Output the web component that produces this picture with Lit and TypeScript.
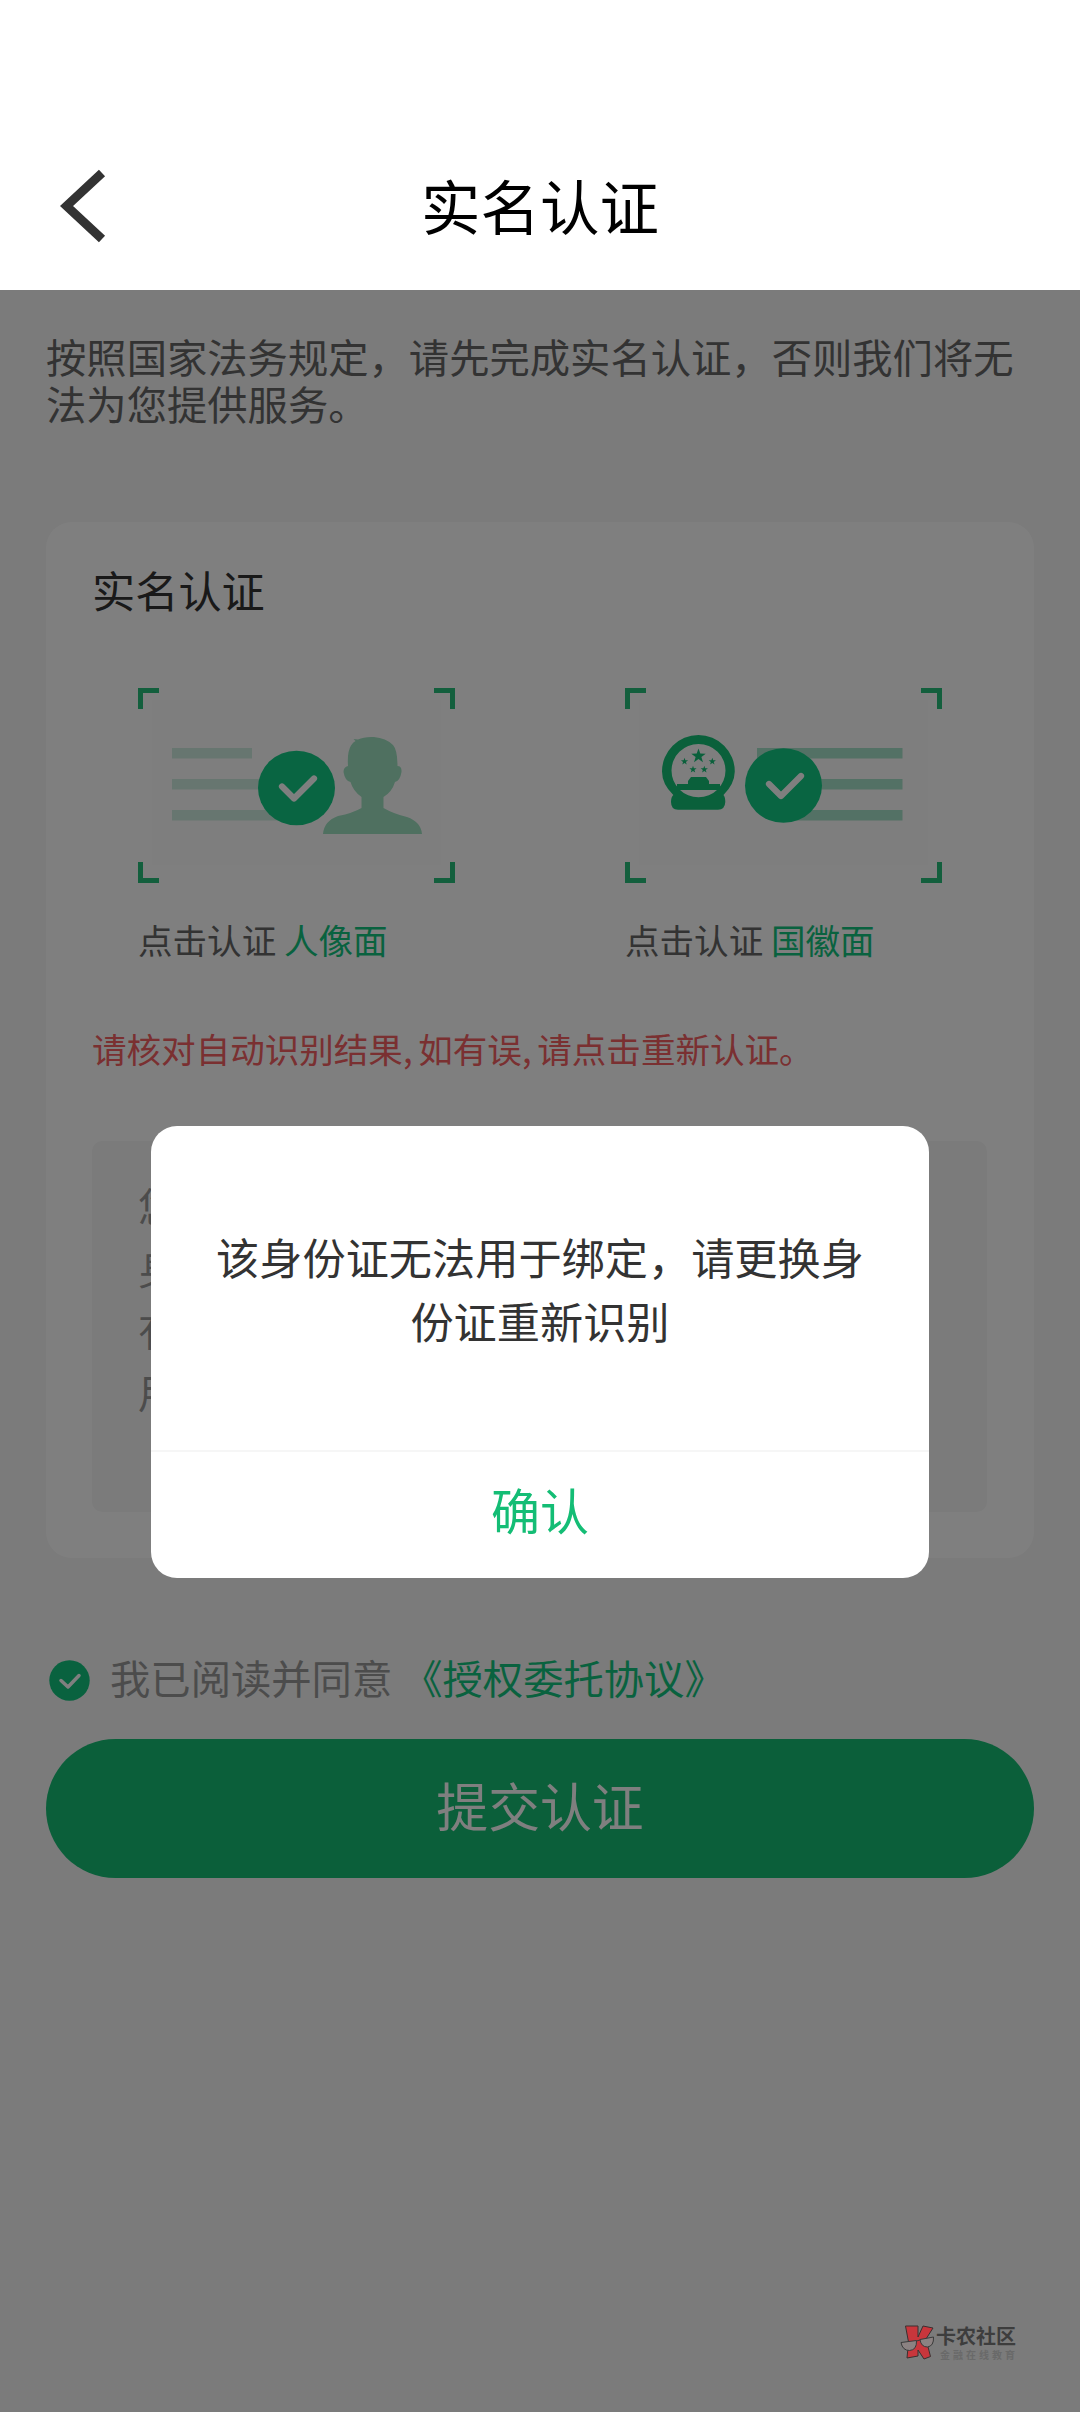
import { LitElement, html, css, svg } from "lit";
import { customElement } from "lit/decorators.js";

const star = (cx: number, cy: number, r: number) => {
  const pts: string[] = [];
  for (let i = 0; i < 10; i++) {
    const k = i % 2 ? r * 0.4 : r;
    const a = -Math.PI / 2 + (i * Math.PI) / 5;
    pts.push(`${(cx + k * Math.cos(a)).toFixed(2)},${(cy + k * Math.sin(a)).toFixed(2)}`);
  }
  return svg`<polygon points=${pts.join(" ")} />`;
};

const corners = svg`<path fill="none" stroke="#26be7b" stroke-width="5"
  d="M2.5 21V2.5H21 M296 2.5H314.5V21 M314.5 174V192.500H296 M21 192.500H2.500V174" />
  <rect x="14" y="12" width="289" height="165" fill="#000" opacity="0.008" />`;

const tick = (cx: number, cy: number) => svg`
  <ellipse cx=${cx} cy=${cy} rx="38.500" ry="37.300" fill="#12cb85" />
  <path transform="translate(${cx} ${cy})" d="M-14.500 -1.500L-2.500 10.500L17.500 -9.500" fill="none"
    stroke="#fff" stroke-width="6.200" stroke-linecap="round" stroke-linejoin="round" />`;

@customElement("app-root")
export class AppRoot extends LitElement {
  static styles = css`
    :host {
      display: block;
      width: 1080px;
      height: 2412px;
      position: relative;
      overflow: hidden;
      background: #f6f6f6;
      font-family: "Noto Sans CJK SC", sans-serif;
      color: #666;
    }
    * { box-sizing: border-box; }
    p, h1, h2 { margin: 0; font-weight: 400; }
    svg { display: block; flex: none; }
    .header {
      position: relative;
      z-index: 2;
      height: 290px;
      padding: 118px 60px 0;
      background: #fff;
      display: grid;
      grid-template-columns: 60px 1fr 60px;
      align-items: center;
    }
    .back { margin-top: 3px; }
    .title { text-align: center; font-size: 59.500px; line-height: 76px; color: #000; }
    .main { padding: 42px 46px 46px; display: flex; flex-direction: column; }
    .intro { font-size: 40.320px; line-height: 47px; height: 190px; }
    .card {
      height: 1036px;
      background: #fff;
      border-radius: 26px;
      padding: 37px 46px 46px;
      display: flex;
      flex-direction: column;
    }
    .card-title { font-size: 43.200px; line-height: 60px; color: #333; }
    .sides { display: flex; gap: 170px; padding: 69px 0 0 46px; }
    .side { width: 317px; }
    .caption { font-size: 34.560px; line-height: 48px; margin-top: 32px; color: #666; white-space: nowrap; }
    .link { color: #12c47e; }
    .warning { font-size: 34.560px; line-height: 48px; margin-top: 61px; word-spacing: -2px; color: #f56063; white-space: nowrap; }
    .info {
      margin-top: auto;
      height: 371px;
      width: 895px;
      border-radius: 10px;
      background: #f7f7f7;
      padding: 33px 46px;
      font-size: 40.320px;
      line-height: 62px;
      color: #999;
    }
    .agree { display: flex; align-items: center; height: 60px; margin: 92px 0 29px 3px; font-size: 40.320px; color: #999; }
    .agree svg { margin-right: 20px; }
    .agree span { margin-top: -7px; }
    .agree .link { margin-left: 10px; }
    .submit {
      height: 139px;
      border-radius: 70px;
      background: #16be74;
      color: #fff;
      font-size: 51.840px;
      padding-bottom: 8px;
      display: flex;
      align-items: center;
      justify-content: center;
    }
    .mask {
      position: absolute;
      inset: 290px 0 0;
      background: rgba(0, 0, 0, 0.5);
    }
    .dialog {
      position: absolute;
      left: 151px;
      top: 1126px;
      width: 778px;
      height: 452px;
      border-radius: 26px;
      background: #fff;
      display: flex;
      flex-direction: column;
      overflow: hidden;
    }
    .message {
      flex: 1;
      display: flex;
      align-items: center;
      justify-content: center;
      text-align: center;
      font-size: 43.200px;
      line-height: 64px;
      color: #333;
      white-space: nowrap;
    }
    .confirm {
      height: 128px;
      border-top: 2px solid #f6f6f6;
      display: flex;
      align-items: center;
      justify-content: center;
      font-size: 48.960px;
      color: #14bd75;
      padding-bottom: 14px;
    }
    .mark { position: absolute; left: 899px; top: 2322px; display: flex; }
    .mark-text { padding: 2px 0 0 1px; white-space: nowrap; }
    .mark-name { font-size: 20px; line-height: 23px; font-weight: 700; color: #3d3d3d; }
    .mark-sub { font-size: 10px; line-height: 15px; letter-spacing: 3px; padding-left: 4px; font-weight: 700; color: #696969; }
  `;

  render() {
    return html`
      <header class="header">
        <svg class="back" width="46" height="74" viewBox="0 0 46 74">
          <path d="M42 4L6.500 37L42 70" fill="none" stroke="#333" stroke-width="9" />
        </svg>
        <h1 class="title">实名认证</h1>
      </header>
      <main class="main">
        <p class="intro">按照国家法务规定，请先完成实名认证，否则我们将无<br />法为您提供服务。</p>
        <section class="card">
          <h2 class="card-title">实名认证</h2>
          <div class="sides">
            <div class="side">
              <svg width="317" height="195" viewBox="0 0 317 195">
                ${corners}
                <path d="M34 60H114V70.500H34ZM34 91H130V101.500H34ZM34 122H140V132.500H34Z" fill="#cfede0" />
                <path fill="#9fe0c1" d="M213 57.500Q215 54 217.500 53L215.500 51L220 51.500Q226 48.500 236 49Q248 50 255 57Q259.500 62 259.500 78Q264 78 263.500 84Q262 93 257 94Q254 104 245.500 109V120Q256 126 269 129Q283 134 284 146H185Q186 133 200 128Q215 125 223.500 120V109Q215 103 212.500 94Q207 93 205.500 84Q205.500 79 210 78Q209 64 213 57.500Z" />
                ${tick(158.5, 100)}
              </svg>
              <p class="caption">点击认证 <span class="link">人像面</span></p>
            </div>
            <div class="side">
              <svg width="317" height="195" viewBox="0 0 317 195">
                ${corners}
                <path d="M132 60H277.500V70.500H132ZM160 91H277.500V101.500H160ZM160 122H277.500V132.500H160Z" fill="#a7e2ca" />
                <g fill="#15c177">
                  <path fill-rule="evenodd" d="M37 83.500A36.400 36.500 0 1 1 109.800 83.500Q109.500 96 98.500 107Q100.300 109 100.300 114Q100 121.700 93 121.700H53Q46 121.700 46 114Q46 109 48.300 107Q37 96 37 83.500ZM46.500 82.600A27 26.600 0 1 0 100.500 82.600A27 26.600 0 1 0 46.500 82.600Z" />
                  ${star(73.5, 68, 7.6)}${star(59.5, 73.5, 3.8)}${star(87.3, 73.5, 3.8)}${star(68, 81.5, 3.8)}${star(79.3, 81.5, 3.8)}
                  <path d="M66 89H81L84 93V96H95V102H52V96H63V93Z" />
                </g>
                ${tick(158.5, 97.5)}
              </svg>
              <p class="caption">点击认证 <span class="link">国徽面</span></p>
            </div>
          </div>
          <p class="warning">请核对自动识别结果, 如有误, 请点击重新认证。</p>
          <div class="info">您<br />身<br />有<br />用</div>
        </section>
        <div class="agree">
          <svg width="41" height="41" viewBox="0 0 41 41">
            <circle cx="20.500" cy="20.500" r="20.200" fill="#12c47e" />
            <path d="M12 20.500L19 27L30 15.500" fill="none" stroke="#fff" stroke-width="3.500" stroke-linecap="round" stroke-linejoin="round" />
          </svg>
          <span>我已阅读并同意</span><span class="link">《授权委托协议》</span>
        </div>
        <div class="submit">提交认证</div>
      </main>
      <div class="mask"></div>
      <section class="dialog">
        <p class="message">该身份证无法用于绑定，请更换身<br />份证重新识别</p>
        <div class="confirm">确认</div>
      </section>
      <div class="mark">
        <svg width="36" height="40" viewBox="0 0 36 40">
          <path d="M6.500 4H19V15L24 4L34 6L27 17L31.500 34.500L25 37L19 28V34L8 36L9.500 20Z" fill="#c8363c" stroke="#3a3030" stroke-width="1" stroke-linejoin="round" />
          <path d="M2 20.500L17.500 18.500Q18 28 10.500 28.500Q3.500 28.500 2 20.500ZM21 17.500L34.500 15Q35 24 28.500 25Q22 25 21 17.500ZM17.500 19L21 18" fill="#8b8282" stroke="#3a3a3a" stroke-width="1" />
        </svg>
        <div class="mark-text">
          <div class="mark-name">卡农社区</div>
          <div class="mark-sub">金融在线教育</div>
        </div>
      </div>
    `;
  }
}
